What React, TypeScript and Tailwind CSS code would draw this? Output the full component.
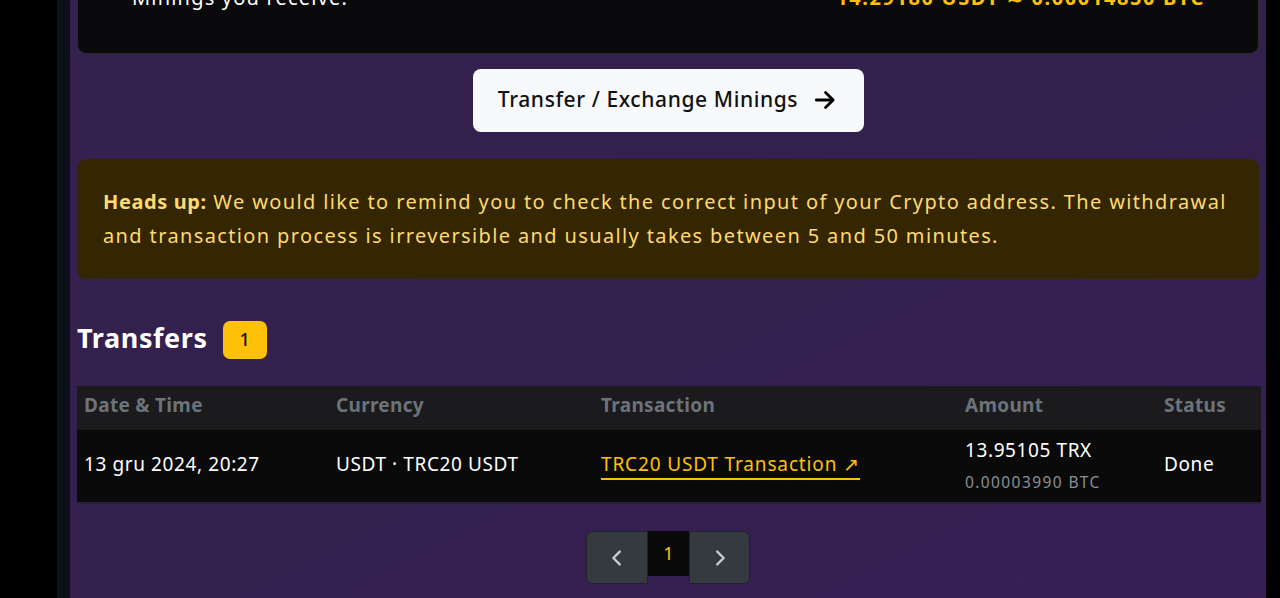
import React from "react";

const font = { fontFamily: '"Noto Sans", "DejaVu Sans", sans-serif' };

function ArrowRight() {
  return (
    <svg width="26" height="26" viewBox="0 0 24 24" fill="none" stroke="#000" strokeWidth="2.6" strokeLinecap="round" strokeLinejoin="round">
      <path d="M4 12h15" />
      <path d="M12.5 5l7 7-7 7" />
    </svg>
  );
}

function Chevron({ dir }: { dir: "left" | "right" }) {
  return (
    <svg width="22" height="22" viewBox="0 0 24 24" fill="none" stroke="#c7cbd1" strokeWidth="2.6" strokeLinecap="round" strokeLinejoin="round">
      {dir === "left" ? <path d="M15 5l-7 7 7 7" /> : <path d="M9 5l7 7-7 7" />}
    </svg>
  );
}

export default function App() {
  return (
    <div className="w-[1280px] h-[598px] overflow-hidden flex bg-black" style={font}>
      <div className="w-[57px] bg-black shrink-0" />
      <div className="w-[13px] bg-[#0c101a] shrink-0" />
      <div className="flex-1 bg-gradient-to-br from-[#35214f] via-[#33204e] to-[#371f55] px-[7px] flex flex-col">
        {/* top card (cut off) */}
        <div className="-mt-[40px] h-[94px] bg-[#0a0a0c] border border-[#2a2a2e] rounded-[9px] pt-[23px] pl-[54px] pr-[53px] flex justify-between text-[20px] leading-[28px]">
          <span className="text-white tracking-[1.2px]">Minings you receive:</span>
          <span className="text-[#ffc107] font-bold tracking-[1.6px]">14.29180 USDT ≈ 0.00014850 BTC</span>
        </div>

        <div className="flex justify-center mt-[15px]">
          <button className="h-[63px] w-[391px] bg-[#f8f9fa] rounded-[8px] flex items-center justify-center gap-[14px] text-[21px] text-[#111] font-medium pb-[2px]">
            <span className="tracking-[0.6px]">Transfer / Exchange Minings</span>
            <ArrowRight />
          </button>
        </div>

        <div className="mt-[27px] h-[120px] bg-[#332600] rounded-[9px] pl-[26px] pr-[20px] pt-[26px] pb-[22px] text-[#ffd971] text-[20px] leading-[34px] tracking-[1.37px]">
          <span className="font-bold tracking-[0.6px]">Heads up:</span> We would like to remind you to check the correct input of your Crypto address. The withdrawal and transaction process is irreversible and usually takes between 5 and 50 minutes.
        </div>

        <div className="mt-[40px] flex items-center gap-[15px]">
          <span className="text-white font-bold text-[27px] leading-[38px] tracking-[0.6px] pb-[3px]">Transfers</span>
          <span className="h-[38px] w-[44px] rounded-[7px] bg-[#ffc107] text-[#111] text-[18px] flex items-center justify-center font-medium">1</span>
        </div>

        <div className="mt-[26px] mr-[-2px] border-b-2 border-[#26213a]">
          <div className="h-[44px] bg-[#1b1b1d] flex items-center text-[19px] font-bold text-[#6d737b] tracking-[0.3px] pb-[5px]">
            <div className="w-[259px] pl-[7px]">Date &amp; Time</div>
            <div className="w-[265px]">Currency</div>
            <div className="w-[364px]">Transaction</div>
            <div className="w-[199px]">Amount</div>
            <div>Status</div>
          </div>
          <div className="h-[72px] bg-[#0a0a0b] flex items-center text-[19px] text-white tracking-[0.6px] pb-[4px]">
            <div className="w-[259px] pl-[7px]">13 gru 2024, 20:27</div>
            <div className="w-[265px]">USDT · TRC20 USDT</div>
            <div className="w-[364px]">
              <span className="text-[#ffc107] border-b-2 border-[#ffc107] pb-[1px] tracking-[0.85px]">TRC20 USDT Transaction ↗</span>
            </div>
            <div className="w-[199px] flex flex-col gap-[6px] pt-[4px]">
              <span className="leading-[26px]">13.95105 TRX</span>
              <span className="text-[15.5px] leading-[26px] text-[#8a8f96] tracking-[1.4px]">0.00003990 BTC</span>
            </div>
            <div>Done</div>
          </div>
        </div>

        <div className="mt-[27px] flex justify-center items-start">
          <div className="w-[62px] h-[53px] bg-[#343a40] border border-[#1f2327] rounded-l-[6px] flex items-center justify-center">
            <Chevron dir="left" />
          </div>
          <div className="w-[41px] h-[45px] bg-[#0a0a0b] text-[#ffc107] text-[18px] flex items-center justify-center">1</div>
          <div className="w-[61px] h-[53px] bg-[#343a40] border border-[#1f2327] rounded-r-[6px] flex items-center justify-center">
            <Chevron dir="right" />
          </div>
        </div>
      </div>
      <div className="w-[14px] bg-black shrink-0" />
    </div>
  );
}
